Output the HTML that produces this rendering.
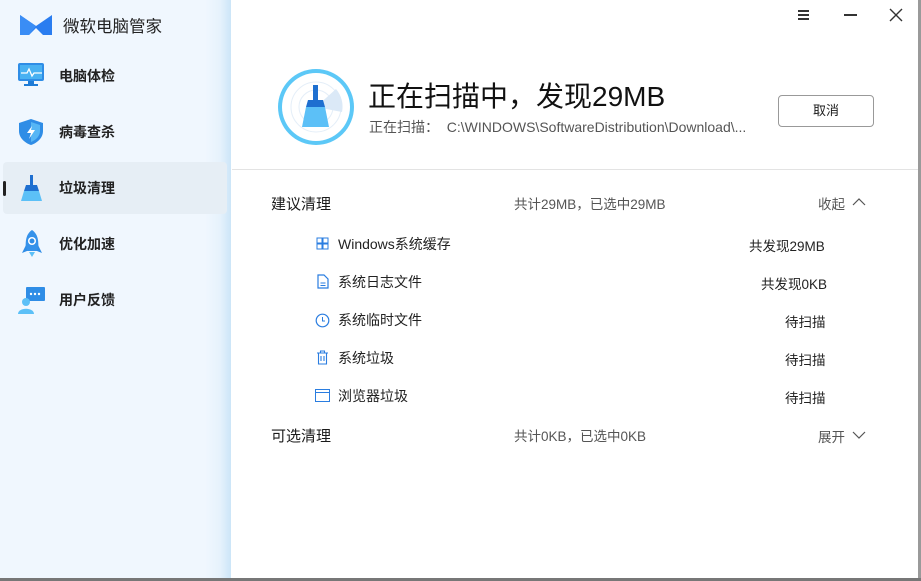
<!DOCTYPE html>
<html><head><meta charset="utf-8"><style>
*{margin:0;padding:0;box-sizing:border-box}
body{width:921px;height:581px;overflow:hidden;background:#fff;font-family:"Liberation Sans","Noto Sans CJK SC",sans-serif;position:relative;color:#1a1a1a}
.side{position:absolute;left:0;top:0;width:231px;height:578px;background:linear-gradient(90deg,#f0f7fe 0,#f0f7fe 205px,#e6f2fc 220px,#cce5f8 231px)}
.abs{position:absolute}
.nav{position:absolute;left:59px;font-size:14px;font-weight:bold;color:#222}
.sel{position:absolute;left:3px;top:162px;width:224px;height:52px;background:#e6eef5;border-radius:4px}
.bar{position:absolute;left:3px;top:181px;width:3px;height:15px;background:#222;border-radius:2px}
.t{position:absolute;font-size:14px;color:#222;white-space:nowrap}
.s{font-size:13.5px}
.g{color:#555}
</style></head><body>
<div class="side"></div>
<div class="sel"></div><div class="bar"></div>
<svg class="abs" style="left:19px;top:14px" width="34" height="22" viewBox="0 0 34 22"><path d="M1 1 L17 12 L33 1 L33 21 L24 21 L17 14 L10 21 L1 21Z" fill="#2a7df0"/><path d="M1 1 L17 12 L10 21 L1 21Z" fill="#3a8df5"/></svg>
<div class="abs" style="left:63px;top:13px;font-size:16.5px;color:#222">微软电脑管家</div>
<svg class="abs" style="left:18px;top:63px" width="27" height="26"><rect x="0" y="0" width="26" height="18" rx="2" fill="#2f8de6"/><rect x="2" y="2" width="22" height="14" fill="#49b1f2"/><path d="M3 10h6l2-4 3 7 2-3h8" stroke="#fff" fill="none" stroke-width="1.3"/><rect x="10" y="18" width="6" height="3" fill="#1e7bd6"/><rect x="6" y="21" width="14" height="2" fill="#1e7bd6"/></svg>
<div class="nav" style="top:66px">电脑体检</div>
<svg class="abs" style="left:18px;top:118px" width="26" height="28"><path d="M13 1 L25 5 V13 C25 20 19 25 13 27 C7 25 1 20 1 13 V5Z" fill="#2f8de6"/><path d="M13 4 L22 7 V13 C22 18 18 22 13 24Z" fill="#56b6f5"/><path d="M14 8 L9 15 H13 L11 21 L17 12 H13Z" fill="#fff"/></svg>
<div class="nav" style="top:122px">病毒查杀</div>
<svg class="abs" style="left:20px;top:174px" width="24" height="28"><rect x="10" y="1" width="3" height="10" fill="#1e6fd0"/><path d="M6 11 H17 L19 17 H4Z" fill="#1e6fd0"/><path d="M4 17 H19 L22 27 H1Z" fill="#5cc0f7"/></svg>
<div class="nav" style="top:178px">垃圾清理</div>
<svg class="abs" style="left:21px;top:229px" width="22" height="30"><path d="M11 1 C17 5 18 12 17 22 H5 C4 12 5 5 11 1Z" fill="#3592ea"/><circle cx="11" cy="12" r="4" fill="#fff"/><circle cx="11" cy="12" r="2.5" fill="#2f8de6"/><path d="M5 16 L1 24 L6 22Z M17 16 L21 24 L16 22Z" fill="#2f8de6"/><path d="M8 23 H14 L11 28Z" fill="#5cc0f7"/></svg>
<div class="nav" style="top:234px">优化加速</div>
<svg class="abs" style="left:18px;top:286px" width="28" height="28"><rect x="8" y="1" width="19" height="14" rx="1" fill="#2f8de6"/><circle cx="13" cy="8" r="1.2" fill="#fff"/><circle cx="17" cy="8" r="1.2" fill="#fff"/><circle cx="21" cy="8" r="1.2" fill="#fff"/><circle cx="8" cy="16" r="4" fill="#5cc0f7"/><path d="M0 28 C0 21 16 21 16 28Z" fill="#5cc0f7"/></svg>
<div class="nav" style="top:290px">用户反馈</div>

<div class="abs" style="left:798px;top:10px;width:11px;height:1.5px;background:#333;box-shadow:0 4px 0 #333,0 8px 0 #333"></div>
<div class="abs" style="left:844px;top:14px;width:13px;height:1.5px;background:#333"></div>
<svg class="abs" style="left:889px;top:8px" width="14" height="14"><path d="M1 1L13 13M13 1L1 13" stroke="#333" stroke-width="1.4"/></svg>

<svg class="abs" style="left:276px;top:67px" width="80" height="80"><circle cx="40" cy="40" r="38" fill="#5cc8f7"/><circle cx="40" cy="40" r="34" fill="#fff"/><circle cx="40" cy="40" r="25" fill="none" stroke="#e4eef8"/><circle cx="40" cy="40" r="17" fill="none" stroke="#e4eef8"/><path d="M40 40 L60 22 A27 27 0 0 1 66 45Z" fill="#dbe9f7"/><rect x="37" y="18" width="5" height="16" fill="#1e6fd0"/><path d="M32 33 H47 L49 40 H30Z" fill="#1e6fd0"/><path d="M30 40 H49 L53 60 H26Z" fill="#5cc0f7"/></svg>
<div class="abs" style="left:368px;top:75px;font-size:28px;color:#111;white-space:nowrap">正在扫描中，发现29MB</div>
<div class="t g" style="left:369px;top:117px">正在扫描：&nbsp;&nbsp;C:\WINDOWS\SoftwareDistribution\Download\...</div>
<div class="abs" style="left:778px;top:95px;width:96px;height:32px;border:1px solid #999;border-radius:4px;font-size:13px;text-align:center;line-height:30px">取消</div>
<div class="abs" style="left:232px;top:169px;width:686px;height:1px;background:#e3e3e3"></div>

<div class="abs" style="left:271px;top:193px;font-size:15px">建议清理</div>
<div class="t s g" style="left:514px;top:193px">共计29MB，已选中29MB</div>
<div class="t s g" style="left:818px;top:193px">收起</div>
<svg class="abs" style="left:852px;top:197px" width="14" height="9"><path d="M1 8L7 2L13 8" stroke="#555" fill="none" stroke-width="1.2"/></svg>

<svg class="abs" style="left:316px;top:237px" width="13" height="13"><path d="M1 1h5v5h-5zM7 1h5v5h-5zM1 7h5v5h-5zM7 7h5v5h-5z" stroke="#2a7de0" fill="none"/></svg>
<div class="t" style="left:338px;top:234px">Windows系统缓存</div><div class="t s" style="left:749px;top:235px">共发现29MB</div>
<svg class="abs" style="left:317px;top:274px" width="12" height="15"><path d="M1 1H7L11 5V14H1Z" stroke="#2a7de0" fill="none" stroke-width="1.2"/><path d="M3.5 9H8.5M3.5 11.5H8.5" stroke="#2a7de0"/></svg>
<div class="t" style="left:338px;top:272px">系统日志文件</div><div class="t s" style="left:761px;top:273px">共发现0KB</div>
<svg class="abs" style="left:315px;top:313px" width="15" height="15"><circle cx="7.5" cy="7.5" r="6.3" stroke="#2a7de0" fill="none" stroke-width="1.2"/><path d="M7.5 4V8H10" stroke="#2a7de0" fill="none"/></svg>
<div class="t" style="left:338px;top:310px">系统临时文件</div><div class="t s" style="left:785px;top:311px">待扫描</div>
<svg class="abs" style="left:316px;top:350px" width="13" height="15"><path d="M1 3H12M4.5 3V1H8.5V3M2.5 3V14H10.5V3M5 6V11M8 6V11" stroke="#2a7de0" fill="none" stroke-width="1.1"/></svg>
<div class="t" style="left:338px;top:348px">系统垃圾</div><div class="t s" style="left:785px;top:349px">待扫描</div>
<svg class="abs" style="left:315px;top:389px" width="15" height="13"><rect x="0.5" y="0.5" width="14" height="12" stroke="#2a7de0" fill="none"/><path d="M0.5 3.5H14.5" stroke="#2a7de0"/></svg>
<div class="t" style="left:338px;top:386px">浏览器垃圾</div><div class="t s" style="left:785px;top:387px">待扫描</div>

<div class="abs" style="left:271px;top:425px;font-size:15px">可选清理</div>
<div class="t s g" style="left:514px;top:425px">共计0KB，已选中0KB</div>
<div class="t s g" style="left:818px;top:426px">展开</div>
<svg class="abs" style="left:852px;top:431px" width="14" height="9"><path d="M1 1L7 7L13 1" stroke="#555" fill="none" stroke-width="1.2"/></svg>

<div class="abs" style="left:918px;top:0;width:3px;height:581px;background:#9a9a9a"></div>
<div class="abs" style="left:0;top:578px;width:921px;height:3px;background:#777"></div>
</body></html>
